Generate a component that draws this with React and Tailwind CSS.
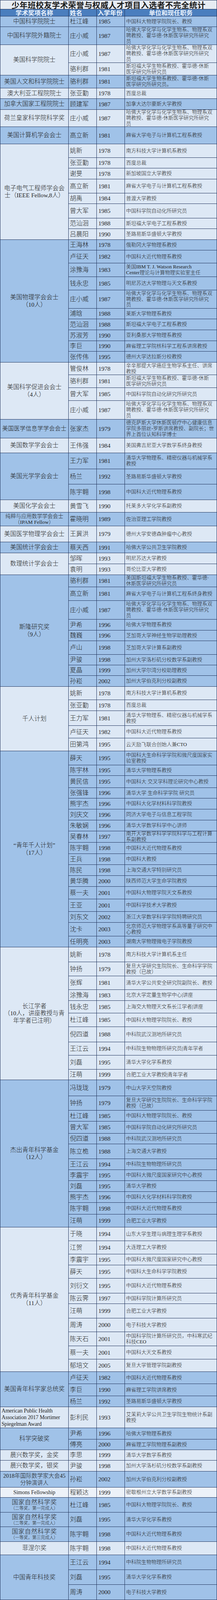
import React from "react";

const ZX = ["哈佛大学化学与化学生物系、物理系双", "聘教授、霍华德·休斯医学研究所研究", "员"];

const H = {
  26: "h-[26px]", 27: "h-[27px]", 28: "h-[28px]", 29: "h-[29px]", 30: "h-[30px]",
  31: "h-[31px]", 32: "h-[32px]", 33: "h-[33px]", 34: "h-[34px]", 35: "h-[35px]",
  36: "h-[36px]", 37: "h-[37px]", 38: "h-[38px]", 39: "h-[39px]", 40: "h-[40px]",
  41: "h-[41px]", 44: "h-[44px]", 46: "h-[46px]", 47: "h-[47px]", 48: "h-[48px]",
  54: "h-[54px]",
};

const BG = { d: "bg-[#a0c2e8]", l: "bg-[#dde8f5]", s: "bg-[#edf2f9]" };

const NSF = (a, b) => (
  <div className="flex flex-col items-center">
    <div className="text-[16px] leading-[17px] tracking-[0.5px]">国家自然科学奖</div>
    <div className="text-[11px] leading-[14px]">（{a}，{b}）</div>
  </div>
);

const groups = [
  { l: ["中国科学院院士"], c: "d", r: [["杜江峰", "1985", ["中国科大物理学院院长、教授"], 27]] },
  { l: ["中国科学院外籍院士"], c: "d", r: [["庄小威", "1987", ZX, 46]] },
  { l: ["美国科学院院士"], c: "l", r: [["庄小威", "1987", ZX, 46], ["骆利群", "1981", ["斯坦福大学生物系教授、霍华德·休斯", "医学研究所研究员"], 32]] },
  { l: ["美国人文和科学院院士"], c: "d", r: [["骆利群", "1981", ["斯坦福大学生物系教授、霍华德·休斯", "医学研究所研究员。"], 33]] },
  { l: ["澳大利亚工程院院士"], c: "l", r: [["张亚勤", "1978", ["百度总裁"], 27]] },
  { l: ["加拿大国家工程院院士"], c: "d", r: [["顾建军", "1987", ["加拿大达尔豪斯大学教授"], 28]] },
  { l: ["荷兰皇家科学院科学奖"], c: "l", r: [["庄小威", "1987", ZX, 44]] },
  { l: ["美国计算机学会会士"], c: "d", r: [["高立新", "1981", ["麻省大学电子与计算机工程系教授"], 44]] },
  {
    l: ["电子电气工程师学会会", "士（IEEE Fellow,8人）"], c: "l", r: [
      ["姚新", "1978", ["南方科技大学计算机系教授"], 35],
      ["张亚勤", "1978", ["百度总裁"], 27],
      ["谢旻", "1978", ["新加坡国立大学教授"], 28],
      ["高立新", "1981", ["麻省大学电子与计算机工程系教授"], 36],
      ["胡禹", "1984", ["普渡大学教授"], 27],
      ["曾大军", "1985", ["中国科学院自动化所研究员"], 37],
      ["范汕洄", "1988", ["斯坦福大学电子工程系教授"], 27],
      ["吕晨阳", "1990", ["圣路易斯华盛顿大学教授"], 28],
    ],
  },
  {
    l: ["美国物理学会会士", "（10人）"], c: "d", r: [
      ["王海林", "1978", ["俄勒冈大学物理系教授"], 27],
      ["卢征天", "1982", ["中国科大近代物理系教授"], 33],
      ["涂豫海", "1983", ["美国IBM T. J. Watson Research", "Center理论与计算物理实验室主任"], 35],
      ["钱永忠", "1985", ["明尼苏达大学物理与天文系教授"], 34],
      ["庄小威", "1987", ZX, 47],
      ["浦晗", "1988", ["莱斯大学物理系教授"], 27],
      ["范汕洄", "1988", ["斯坦福大学电子工程系教授"], 28],
      ["苏淑芳", "1990", ["亚利桑那大学物理系教授"], 28],
      ["李巨", "1990", ["麻省理工学院核科学工程系讲席教授"], 27],
      ["张传伟", "1995", ["德州大学达拉斯分校教授"], 28],
    ],
  },
  {
    l: ["美国科学促进会会士", "（4人）"], c: "l", r: [
      ["管俊林", "1978", ["辛辛那提大学癌症生物学系主任、讲席", "教授"], 32],
      ["骆利群", "1981", ["斯坦福大学生物系教授、霍华德·休斯", "医学研究所研究员"], 33],
      ["曾大军", "1985", ["中国科学院自动化研究所研究员"], 33],
      ["庄小威", "1987", ZX, 48],
    ],
  },
  { l: ["美国医学信息学学会会士"], small: true, c: "d", r: [["张家杰", "1979", ["德克萨斯大学休斯医顿疗中心健康信息", "学院多丽丝-罗斯讲席教授、副院长；世", "界上首位认知科学博士"], 48]] },
  { l: ["美国数学学会会士"], c: "l", r: [["王伟强", "1984", ["美国弗吉尼亚大学数学系终身教授"], 38]] },
  {
    l: ["美国光学学会会士"], c: "d", r: [
      ["王力军", "1981", ["清华大学物理系、精密仪器与机械学系", "教授"], 41],
      ["杨兰", "1992", ["圣路易斯华盛顿大学教授"], 39],
      ["陈宇翱", "1998", ["中国科大近代物理系教授"], 40],
    ],
  },
  { l: ["美国化学会会士"], c: "l", r: [["黄雪飞", "1990", ["托莱多大学化学系副教授"], 32]] },
  {
    node: (
      <div className="flex flex-col items-center">
        <div className="text-[13.5px] leading-[15px]">纯粹与应用数学学会会士</div>
        <div className="text-[13.5px] leading-[15px]">（IPAM Fellow）</div>
      </div>
    ),
    c: "d", r: [["霍晓明", "1989", ["佐治亚理工学院教授"], 35]],
  },
  { l: ["美国医学物理学会会士"], c: "l", r: [["王冀洪", "1979", ["德州大学安德森肿瘤中心教授"], 41]] },
  { l: ["美国统计学会会士"], c: "d", r: [["蔡天西", "1991", ["哈佛大学公共卫生学院教授"], 28]] },
  { l: ["数理统计学会会士"], c: "l", r: [["邹晖", "1993", ["明尼苏达大学教授"], 28], ["袁明", "1993", ["哥伦比亚大学教授"], 28]] },
  {
    l: ["斯隆研究奖", "（9人）"], c: "d", r: [
      ["骆利群", "1981", ["美国斯坦福大学生物系教授、霍华德·", "休斯医学研究所研究员"], 31],
      ["高立新", "1981", ["麻省大学电子与计算机工程系终身教授"], 35],
      ["庄小威", "1987", ZX, 48],
      ["尹希", "1996", ["哈佛大学物理系教授"], 28],
      ["魏巍", "1996", ["芝加哥大学神经生物学助理教授"], 27],
      ["卢山", "1998", ["芝加哥大学计算系副教授"], 35],
      ["尹骏", "1998", ["加州大学洛杉矶分校数学系副教授"], 27],
      ["夏晶", "1999", ["加州大学尔湾分校助理教授"], 27],
      ["孙崧", "2002", ["加州大学伯克利分校副教授"], 28],
    ],
  },
  {
    l: ["千人计划"], c: "l", r: [
      ["姚新", "1978", ["南方科技大学计算机系教授"], 34],
      ["张亚勤", "1978", ["百度总裁"], 28],
      ["王力军", "1981", ["清华大学物理系、精密仪器与机械学系", "教授"], 38],
      ["卢征天", "1982", ["中国科大近代物理系教授"], 32],
      ["田第鸿", "1995", ["云天励飞联合创始人兼CTO"], 33],
    ],
  },
  {
    l: ["“青年千人计划”", "（17人）"], c: "d", r: [
      ["薛天", "1995", ["中国科大生命科学学院和微尺度国家实", "验室教授"], 36],
      ["陈宇林", "1995", ["清华大学物理系教授"], 27],
      ["黄民信", "1995", ["中国科大 交叉学科理论研究中心教授"], 31],
      ["张强锋", "1996", ["清华大学 生命科学学院 研究员"], 27],
      ["熊宇杰", "1996", ["中国科大化学材料科学院教授"], 28],
      ["刘庆文", "1996", ["同济大学电子与信息工程学院"], 28],
      ["朱敏娴", "1996", ["清华大学数学科学中心讲师"], 28],
      ["吴春林", "1997", ["南开大学数学科学学院科学与工程计算", "系副教授"], 29],
      ["陈宇翱", "1998", ["中国科大近代物理系教授"], 29],
      ["王兵", "1998", ["中国科大教授"], 28],
      ["陈民", "1998", ["上海交通大学特别研究员"], 28],
      ["黄华腾", "2000", ["陕西师范大学生命学院教授"], 28],
      ["蔡一夫", "2001", ["中国科大物理学院天文系教授"], 32],
      ["王亚", "2001", ["中国科学技术大学教授"], 32],
      ["刘东文", "2002", ["浙江大学数学科学学院特聘研究员"], 28],
      ["沈卡", "2003", ["北京师范大学物理学系高等量子研究中", "心教授"], 35],
      ["任明亮", "2003", ["湖南大学物理微电子学院教授"], 28],
    ],
  },
  {
    l: ["长江学者", "（10人，讲座教授与青", "年学者已注明）"], c: "l", r: [
      ["姚新", "1978", ["南方科技大学计算机系主任"], 38],
      ["钟扬", "1979", ["复旦大学研究生院院长、生命科学学院", "教授（已故）"], 36],
      ["张辉", "1981", ["清华大学公共安全研究院副院长、教授"], 35],
      ["涂豫海", "1983", ["北京大学定量生物学中心|讲座"], 28],
      ["钱永忠", "1985", ["上海交大物理天文系长江学者|讲座"], 32],
      ["杜江峰", "1985", ["中国科大物理学院院长、教授"], 35],
      ["倪四道", "1988", ["中科院武汉测地所研究员"], 39],
      ["王江云", "1994", ["中科院生物物理所研究员|青年学者"], 34],
      ["刘磊", "1995", ["清华大学化学系教授"], 36],
      ["汪萌", "1999", ["合肥工业大学教授|青年学者"], 27],
    ],
  },
  {
    l: ["杰出青年科学基金", "（12人）"], c: "d", r: [
      ["冯珑珑", "1979", ["中山大学天空院教授"], 41],
      ["钟扬", "1979", ["复旦大学研究生院院长、生命科学学院", "教授（已故）"], 37],
      ["杜江峰", "1985", ["中国科大物理学院院长、教授"], 28],
      ["曾大军", "1985", ["中国科学院自动化研究所研究员"], 31],
      ["倪四道", "1988", ["中科院武汉测地所研究员"], 27],
      ["陈立桅", "1988", ["上海交通大学教授"], 38],
      ["王江云", "1994", ["中科院生物物理所研究员"], 28],
      ["李震宇", "1995", ["中国科大微尺度国家研究中心教授"], 28],
      ["刘磊", "1995", ["清华大学教授"], 28],
      ["熊宇杰", "1996", ["中国科大化学材料科学院教授"], 28],
      ["陈宇翱", "1998", ["中国科大近代物理系教授"], 30],
      ["汪萌", "1999", ["合肥工业大学教授"], 33],
    ],
  },
  {
    l: ["优秀青年科学基金", "（11人）"], c: "l", r: [
      ["于晓", "1994", ["山东大学生理与病理生理学系教授"], 35],
      ["江贺", "1994", ["大连理工大学教授"], 34],
      ["李震宇", "1995", ["中国科大微尺度国家研究中心教授"], 28],
      ["薛天", "1995", ["中国科大生命科学学院教授"], 34],
      ["刘衍文", "1995", ["中国科大近代物理系教授"], 38],
      ["陈云霁", "1997", ["中国科学院计算所研究员"], 27],
      ["汪萌", "1999", ["合肥工业大学教授"], 37],
      ["周涛", "2000", ["电子科技大学教授"], 35],
      ["陈天石", "2001", ["中国科学院计算所研究员，中科寒武纪", "科技CEO"], 36],
      ["蔡一夫", "2001", ["中国科大天文系教授"], 34],
      ["郁培文", "2005", ["复旦大学管理学院副教授"], 32],
    ],
  },
  {
    l: ["美国青年科学家总统奖"], c: "d", r: [
      ["卢征天", "1982", ["中国科大近代物理系教授"], 31],
      ["李巨", "1990", ["麻省理工学院讲席教授"], 31],
      ["杨兰", "1992", ["圣路易斯华盛顿大学教授"], 28],
    ],
  },
  {
    node: (
      <div className="flex flex-col items-start self-stretch pl-[3px] text-[14px] leading-[17px] tracking-[-0.2px]">
        <div>American Public Health</div>
        <div>Association 2017 Mortimer</div>
        <div>Spiegelman Award</div>
      </div>
    ),
    c: "l", r: [["彭利民", "1993", ["艾茉莉大学公共卫生学院生物统计系副", "教授"], 54]],
  },
  { l: ["科学突破奖"], c: "d", r: [["尹希", "1996", ["哈佛大学物理系教授"], 29], ["傅亮", "2000", ["麻省理工学院物理系副教授"], 27]] },
  { l: ["晨兴数学奖，金奖"], c: "l", r: [["李思", "1999", ["清华大学数学系教授"], 27]] },
  { l: ["晨兴数学奖，银奖"], c: "l", r: [["尹骏", "1998", ["加州大学洛杉矶分校数学系副教授"], 28]] },
  {
    node: (
      <div className="flex flex-col items-center text-[14.5px] leading-[18px]">
        <div>2018年国际数学家大会45</div>
        <div>分钟演讲人</div>
      </div>
    ),
    c: "d", r: [["孙崧", "2002", ["加州大学伯克利分校副教授"], 41]],
  },
  { node: <div className="text-[14px] leading-[18px]">Simons Fellowship</div>, c: "s", r: [["程颖达", "1999", ["密歇根州立大学数学系副教授"], 26]] },
  { node: NSF("二等奖", "第一完成人"), c: "d", r: [["杜江峰", "1985", ["中国科大物理学院院长、教授"], 38]] },
  { node: NSF("二等奖", "第一完成人"), c: "d", r: [["刘磊", "1995", ["清华大学化学系教授"], 37]] },
  { node: NSF("一等奖", "第三完成人"), c: "d", r: [["陈宇翱", "1998", ["中国科大近代物理系教授"], 38]] },
  { l: ["菲涅尔奖"], c: "l", r: [["陈宇翱", "1998", ["中国科大近代物理系教授"], 34]] },
  {
    l: ["中国青年科技奖"], c: "d", r: [
      ["王江云", "1994", ["中科院生物物理所研究员"], 38],
      ["刘磊", "1995", ["清华大学化学系教授"], 38],
      ["周涛", "2000", ["电子科技大学教授"], 39],
    ],
  },
];

const BC = "border-[#22355e]";

function Group({ g }) {
  return (
    <div className={`flex ${BG[g.c]}`}>
      <div className={`w-[175px] shrink-0 border-r border-b ${BC} flex flex-col items-center justify-center text-center`}>
        {g.node
          ? g.node
          : g.l.map((t, i) => (
              <div key={i} className={`${g.small ? "text-[15px]" : "text-[15.5px]"} leading-[18.5px] whitespace-nowrap`}>
                {t}
              </div>
            ))}
      </div>
      <div className="flex-1 flex flex-col">
        {g.r.map(([name, year, pos, h], i) => (
          <div key={i} className={`flex ${H[h]} border-b ${BC}`}>
            <div className={`w-[72px] shrink-0 border-r ${BC} flex items-center pl-[3px] text-[16px] leading-[20px] whitespace-nowrap`}>
              {name}
            </div>
            <div className={`w-[72px] shrink-0 border-r ${BC} flex items-center pl-[4px] text-[15.5px] leading-[20px]`}>
              {year}
            </div>
            <div className="flex-1 flex flex-col justify-center pl-[3px] text-[13px] leading-[14.8px] whitespace-nowrap">
              {pos.map((p, j) => (
                <div key={j}>{p}</div>
              ))}
            </div>
          </div>
        ))}
      </div>
    </div>
  );
}

export default function App() {
  return (
    <div className={`w-[556px] border-l border-r ${BC} text-[#1e1e24] font-['Liberation_Serif','Noto_Sans_CJK_SC',serif] font-light`}>
      <div className={`h-[24px] bg-[#e7ecf3] border-t border-b ${BC} flex items-center justify-center font-['Noto_Sans_CJK_SC',sans-serif] font-bold text-[20.5px] leading-[22px] text-[#1a1a1a] tracking-[0.2px]`}>
        少年班校友学术荣誉与权威人才项目入选者不完全统计
      </div>
      <div className={`flex h-[18px] bg-[#4a7ebe] border-b ${BC} text-[#eef4fc] font-['Noto_Sans_CJK_SC',sans-serif] font-bold text-[16px] leading-[17px]`}>
        <div className={`w-[175px] border-r ${BC} flex items-center justify-center`}>学术奖项名称</div>
        <div className={`w-[72px] border-r ${BC} flex items-center pl-[3px]`}>姓名</div>
        <div className={`w-[72px] border-r ${BC} flex items-center pl-[2px] whitespace-nowrap`}>入学年份</div>
        <div className="flex-1 flex items-center justify-center">单位和现任职务</div>
      </div>
      {groups.map((g, i) => (
        <Group key={i} g={g} />
      ))}
    </div>
  );
}
